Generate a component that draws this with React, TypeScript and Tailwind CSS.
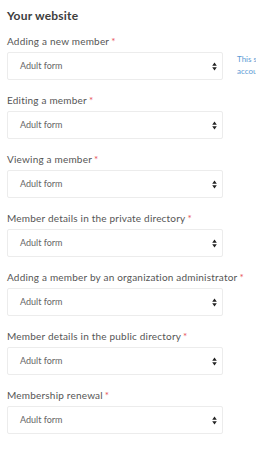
const FIELDS = [
  'Adding a new member',
  'Editing a member',
  'Viewing a member',
  'Member details in the private directory',
  'Adding a member by an organization administrator',
  'Member details in the public directory',
  'Membership renewal',
];

function SortArrows() {
  return (
    <svg width="5" height="9" viewBox="0 0 5 9" className="shrink-0">
      <path d="M2.5 0.5 L4.8 3.7 H0.2 Z" fill="#222" />
      <path d="M2.5 8.5 L4.8 5.3 H0.2 Z" fill="#222" />
    </svg>
  );
}

export default function App() {
  return (
    <div className="w-[256px] h-[449px] overflow-hidden bg-white font-['Lato',sans-serif] text-[#4a4a4a]">
      <div className="pl-[7px] pt-[8px]">
        <h2 className="text-[12px] font-bold text-[#3d3d3d] leading-[16px] tracking-[0.2px]">Your website</h2>
        <div className="mt-[10px] flex flex-col gap-[13px]">
          {FIELDS.map((f, i) => (
            <div key={f}>
              <p className="text-[10px] leading-[14px] text-[#555] tracking-[0.2px] whitespace-nowrap">
                {f}
                <span className="text-[#e8545a] ml-[2px]">*</span>
              </p>
              <div className="mt-[4px] flex items-start">
                <div className="w-[216px] h-[28px] shrink-0 border border-[#ececec] rounded-[2px] flex items-center justify-between pl-[12px] pr-[5px]">
                  <span className="text-[9px] text-[#666]">Adult form</span>
                  <SortArrows />
                </div>
                {i === 0 && (
                  <div className="ml-[14px] mt-[1px] shrink-0 text-[8px] leading-[12px] text-[#5b9bd5] whitespace-nowrap">
                    <p>This setting controls which form</p>
                    <p>accounts use when members join</p>
                  </div>
                )}
              </div>
            </div>
          ))}
        </div>
      </div>
    </div>
  );
}
